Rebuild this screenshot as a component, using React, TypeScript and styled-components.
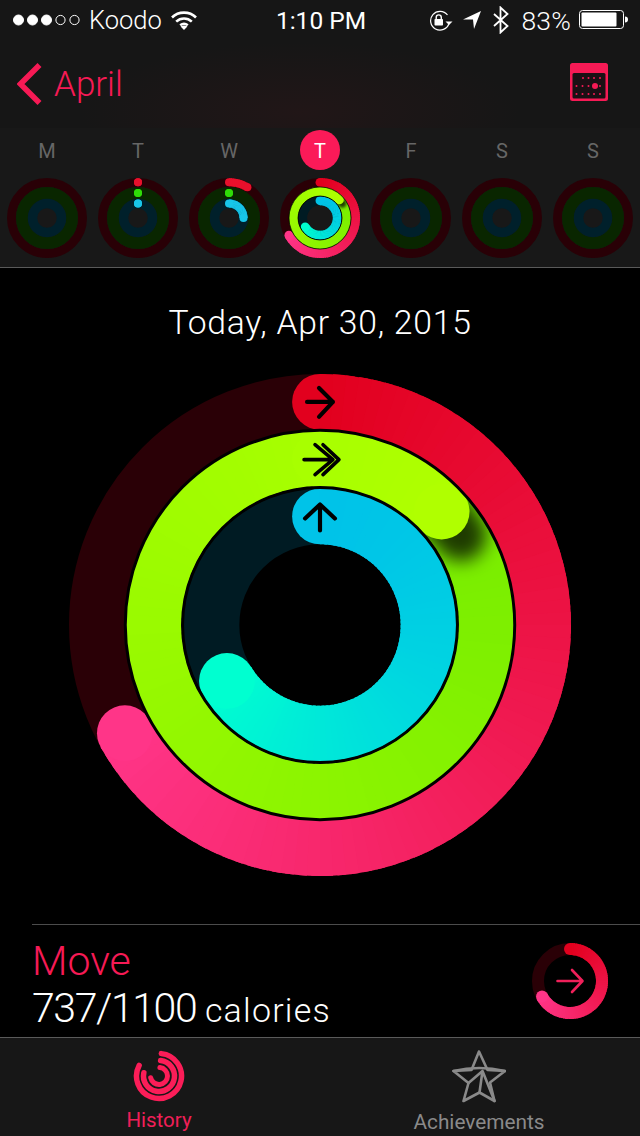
import React, { useId } from "react";
import styled, { createGlobalStyle } from "styled-components";

const PINK = "#f61a55";
const FONT = `Roboto, "Liberation Sans", sans-serif`;

const Global = createGlobalStyle`
  html, body { margin: 0; padding: 0; background: #000; }
  *, *::before, *::after { box-sizing: border-box; }
  #root { width: 640px; height: 1136px; overflow: hidden; }
`;

const Screen = styled.div`
  width: 640px; height: 1136px; display: flex; flex-direction: column;
  background: #000; color: #fff; font-family: ${FONT}; font-weight: 300;
`;
const Header = styled.header`
  background: radial-gradient(220px 70px at 300px 112px, #211617, #161616);
`;
const StatusBar = styled.div`
  height: 40px; display: grid; grid-template-columns: 1fr auto 1fr; align-items: center;
  padding: 0 11px 0 13px; font-size: 25.5px; color: #fff;
`;
const StatusLeft = styled.div`display: flex; align-items: center; gap: 9px;`;
const StatusRight = styled.div`
  display: flex; align-items: center; justify-content: flex-end; gap: 10px;
  svg:nth-child(2) { margin-right: 2px; }
`;
const Clock = styled.div`font-weight: 400; font-size: 24.5px;`;
const Percent = styled.span`font-size: 26.5px; letter-spacing: .2px; margin: 0 -2px 0 2px;`;
const NavBar = styled.nav`
  height: 88px; display: flex; align-items: center; justify-content: space-between;
  padding: 0 32px 4px 17px;
`;
const BackLink = styled.div`
  display: flex; align-items: center; gap: 12px; color: ${PINK};
  font-size: 35px; margin-top: 4px;
`;
const WeekStrip = styled.section`
  height: 140px; border-bottom: 1px solid #5a5a5a;
  background: #181818; display: grid; grid-template-columns: repeat(7, 91px);
  padding: 0 1.5px;
`;
const DayCell = styled.div`display: flex; flex-direction: column; align-items: center;`;
const DayLetter = styled.div<{ $active?: boolean }>`
  width: 40px; height: 40px; margin: 2px 0 8px; border-radius: 50%;
  display: flex; align-items: center; justify-content: center;
  font-size: 20px; font-weight: 400; padding-top: 1px;
  color: ${(p) => (p.$active ? "#fff" : "#666")};
  background: ${(p) => (p.$active ? "#fb1a58" : "transparent")};
`;
const Main = styled.main`flex: 1; display: flex; flex-direction: column; align-items: center; min-height: 0;`;
const DateTitle = styled.h1`
  margin: 35px 0 31px; height: 40px; line-height: 40px;
  font-size: 33.7px; font-weight: 300; letter-spacing: .75px;
`;
const Divider = styled.div`align-self: stretch; height: 1px; margin: 48px 0 0 32px; background: #4c4c4c;`;
const Summary = styled.section`
  align-self: stretch; display: flex; justify-content: space-between; align-items: center;
  padding: 0 30px 0 32px; flex: 1;
`;
const SummaryText = styled.div`display: flex; flex-direction: column; margin-top: 10px;`;
const MetricName = styled.div`color: ${PINK}; font-size: 41px; line-height: 46px;`;
const MetricValue = styled.div`font-size: 41px; line-height: 48px; letter-spacing: -1.4px;`;
const MetricUnit = styled.span`font-size: 34px; letter-spacing: 1.2px;`;
const TabBar = styled.footer`
  height: 99px; border-top: 1px solid #5a5a5a; background: #171717;
  display: grid; grid-template-columns: 318px 1fr;
`;
const Tab = styled.div<{ $active?: boolean }>`
  display: flex; flex-direction: column; align-items: center; padding-top: 12px;
  color: ${(p) => (p.$active ? "#f01f58" : "#8a8a8a")}; font-size: 20.5px; font-weight: 400;
`;
const TabLabel = styled.div<{ $wide?: boolean }>`
  margin-top: 6px; line-height: 24px; font-size: ${(p) => (p.$wide ? "20.8px" : "20.5px")};
`;

type Stop = [number, number, number];
const hex = (h: string): Stop => [parseInt(h.slice(1, 3), 16), parseInt(h.slice(3, 5), 16), parseInt(h.slice(5, 7), 16)];
const mix = (a: string, b: string, t: number) => {
  const x = hex(a), y = hex(b);
  return `rgb(${x.map((v, i) => Math.round(v + (y[i] - v) * t)).join(",")})`;
};
const polar = (c: number, r: number, deg: number) => {
  const a = ((deg - 90) * Math.PI) / 180;
  return [c + r * Math.cos(a), c + r * Math.sin(a)];
};
const arcPath = (c: number, r: number, a: number, b: number) => {
  const [x1, y1] = polar(c, r, a), [x2, y2] = polar(c, r, b);
  return `M${x1.toFixed(2)} ${y1.toFixed(2)}A${r} ${r} 0 ${b - a > 180 ? 1 : 0} 1 ${x2.toFixed(2)} ${y2.toFixed(2)}`;
};

function Sweep(p: { c: number; r: number; w: number; from: string; to: string; a: number; b: number; total: number; ease?: number; cap?: boolean; startCap?: boolean }) {
  const segs = [];
  const step = 3;
  const tone = (d: number) => mix(p.from, p.to, Math.pow(d / p.total, p.ease ?? 1));
  for (let d = p.a; d < p.b; d += step) {
    const e = Math.min(d + step + 2, p.b);
    segs.push(<path key={d} d={arcPath(p.c, p.r, d, e)} fill="none" stroke={tone(d)} strokeWidth={p.w} />);
  }
  const [sx, sy] = polar(p.c, p.r, p.a), [ex, ey] = polar(p.c, p.r, p.b);
  return (
    <g>
      {p.startCap && <circle cx={sx} cy={sy} r={p.w / 2} fill={tone(p.a)} />}
      {segs}
      {p.cap && <circle cx={ex} cy={ey} r={p.w / 2} fill={tone(p.b)} />}
    </g>
  );
}

function ActivityRings({ size, arrows }: { size: number; arrows?: boolean }) {
  const id = useId().replace(/[^a-z0-9]/gi, "");
  const c = 252;
  return (
    <svg width={size} height={size} viewBox="0 0 504 504" style={{ display: "block", flex: "none" }}>
      <defs>
        <filter id={`b${id}`} filterUnits="userSpaceOnUse" x="0" y="0" width="504" height="504"><feGaussianBlur stdDeviation="9" /></filter>
        <clipPath id={`c${id}`}>
          <path clipRule="evenodd" d="M252 57a195 195 0 1 1 0 390a195 195 0 1 1 0-390zM252 113a139 139 0 1 0 0 278a139 139 0 1 0 0-278z" />
        </clipPath>
      </defs>
      <circle cx={c} cy={c} r={224} fill="none" stroke="#2a0006" strokeWidth={56} />
      <circle cx={c} cy={c} r={109} fill="none" stroke="#001b23" strokeWidth={56} />
      <Sweep c={c} r={224} w={56} from="#e2001e" to="#ff3588" a={0} b={241} total={241} cap startCap />
      <Sweep c={c} r={167} w={56} from="#70ea00" to="#a8ff00" a={0} b={360} total={360} />
      <g clipPath={`url(#c${id})`}>
        <path d={arcPath(c, 167, 40, 54)} fill="none" stroke="#000" strokeOpacity=".75" strokeWidth={52} strokeLinecap="round" filter={`url(#b${id})`} transform="translate(6 8)" />
      </g>
      <Sweep c={c} r={167} w={56} from="#a8ff00" to="#b0ff00" a={0} b={47} total={47} cap startCap />
      <Sweep c={c} r={109} w={56} from="#00c3e8" to="#00ffd0" a={0} b={239} total={239} ease={1.6} cap startCap />
      <circle cx={c} cy={c} r={195.5} fill="none" stroke="#000" strokeWidth={arrows ? 3 : 5} />
      <circle cx={c} cy={c} r={138} fill="none" stroke="#000" strokeWidth={arrows ? 3 : 6} />
      {arrows && (
        <g fill="none" stroke="#000" strokeWidth={4.2} strokeLinecap="round" strokeLinejoin="round">
          <path d="M239 28H265M251 14L265 28L251 43" />
          <path d="M236 86H264M247 71L265 86L247 101M255 71L271 86L255 101" strokeWidth={3.6} />
          <path d="M252 157V131M237 145L252 131L267 145" />
        </g>
      )}
    </svg>
  );
}

type DayRing = { red?: number; green?: number; blue?: number };
function MiniRings({ red, green, blue }: DayRing) {
  const c = 40;
  return (
    <svg width={80} height={80} viewBox="0 0 80 80" style={{ display: "block" }}>
      <circle cx={c} cy={c} r={35.5} fill="none" stroke="#290006" strokeWidth={9} />
      <circle cx={c} cy={c} r={25} fill="none" stroke="#092600" strokeWidth={12} />
      <circle cx={c} cy={c} r={14.5} fill="none" stroke="#00202b" strokeWidth={9.500} />
      {red !== undefined && <Sweep c={c} r={35.8} w={8} from="#e9102c" to="#e9102c" a={0} b={red} total={1} cap startCap />}
      {green !== undefined && <Sweep c={c} r={25} w={8} from="#2fdc08" to="#2fdc08" a={0} b={green} total={1} cap startCap />}
      {blue !== undefined && <Sweep c={c} r={14.5} w={8} from="#18c6ea" to="#18c6ea" a={0} b={blue} total={1} cap startCap />}
    </svg>
  );
}

const Signal = () => (
  <svg width="67" height="14" viewBox="0 0 67 14" fill="#fff" stroke="#fff">
    <circle cx="5.5" cy="7" r="5" /><circle cx="19.5" cy="7" r="5" /><circle cx="33.5" cy="7" r="5" />
    <circle cx="47.5" cy="7" r="4.6" fill="none" strokeWidth="1" /><circle cx="61.5" cy="7" r="4.6" fill="none" strokeWidth="1" />
  </svg>
);
const Wifi = () => (
  <svg width="26" height="20" viewBox="0 0 26 20" fill="none" stroke="#fff" strokeWidth="2.6">
    <path d="M1 7.5C7.5 1 18.5 1 25 7.5" /><path d="M5.2 11.6C9.8 7.4 16.2 7.4 20.8 11.6" />
    <path d="M9.2 15.2C11.5 13.4 14.5 13.4 16.8 15.2" /><path d="M13 20L9.6 16.6C11.5 15 14.5 15 16.4 16.6Z" fill="#fff" stroke="none" />
  </svg>
);
const RotationLock = () => (
  <svg width="25" height="21" viewBox="0 0 25 21">
    <path d="M21 13.5A9.4 9.4 0 1 1 19.5 5" fill="none" stroke="#fff" strokeWidth="1.2" />
    <path d="M17.5 11.5H24.5L21 15Z" fill="#fff" />
    <rect x="6.5" y="9" width="8.5" height="6.5" rx=".8" fill="#fff" />
    <path d="M8.2 9V7.4a2.55 2.55 0 0 1 5.1 0V9" fill="none" stroke="#fff" strokeWidth="1.4" />
  </svg>
);
const Location = () => (
  <svg width="18" height="18" viewBox="0 0 18 18"><path d="M0 8.5L18 0L11 18L10 8.5Z" fill="#fff" /></svg>
);
const Bluetooth = () => (
  <svg width="16" height="28" viewBox="0 0 16 28" fill="none" stroke="#fff" strokeWidth="1.8">
    <path d="M1 8L14.5 20L7.5 26.5V1.5L14.5 8L1 20" />
  </svg>
);
const Battery = () => (
  <svg width="50" height="20" viewBox="0 0 50 20">
    <rect x=".5" y=".5" width="44" height="18" rx="3" fill="none" stroke="#fff" />
    <rect x="2.5" y="2.5" width="35" height="14" rx="1" fill="#fff" />
    <path d="M46 6.5C48 6.5 49 7.5 49 9.5S48 12.5 46 12.5Z" fill="#fff" />
  </svg>
);
const Chevron = () => (
  <svg width="25" height="42" viewBox="0 0 25 42" fill="none" stroke={PINK} strokeWidth="5.6" strokeLinejoin="miter">
    <path d="M22.5 2L3.5 21L22.5 40" />
  </svg>
);
const CalendarIcon = () => {
  const dots = [];
  for (const [y, xs] of [[15, [13, 18.5, 24, 30]], [23, [6.5, 12.5, 18.5, 30]], [31, [6.5, 12.5, 18.5, 24, 30]]] as [number, number[]][]) {
    for (const x of xs) dots.push(<circle key={`${x}-${y}`} cx={x} cy={y} r="1" fill={PINK} />);
  }
  return (
    <svg width="38" height="38" viewBox="0 0 38 38">
      <rect width="38" height="38" rx="2.5" fill={PINK} />
      <rect x="2.5" y="10" width="33" height="25.5" rx="1.5" fill="#1a1014" />
      {dots}
      <circle cx="25" cy="23" r="3" fill={PINK} />
    </svg>
  );
};
const HistoryIcon = () => (
  <svg width="52" height="52" viewBox="0 0 52 52" fill="none" stroke="#fb1d58" strokeLinecap="round">
    <path d={arcPath(26, 22.5, 6, 298)} strokeWidth="5.5" />
    <path d={arcPath(26, 15.5, 6, 282)} strokeWidth="5.5" />
    <path d={arcPath(26, 8.5, 6, 258)} strokeWidth="5" />
  </svg>
);
const StarIcon = () => (
  <svg width="54" height="54" viewBox="0 0 54 54" fill="none" stroke="#8a8a8a" strokeWidth="2.6" strokeLinejoin="round" strokeLinecap="round">
    <path d="M27 1.5L19.500 20L1.500 21L16.500 33L11.500 51L27.500 42.500L42.500 51L38 32.500L53 21L35.500 20Z" />
    <path d="M1.500 21C18.500 17 36 17 53 21" />
    <path d="M30.500 21L16.500 33M30.500 21L27.500 42.500M30.500 21L42.500 51" />
  </svg>
);
const MoveRing = () => {
  const c = 40;
  return (
    <svg width="80" height="80" viewBox="0 0 80 80">
      <circle cx={c} cy={c} r={32} fill="none" stroke="#2a0006" strokeWidth={12} />
      <Sweep c={c} r={32} w={12} from="#e2001e" to="#ff3588" a={0} b={241} total={241} cap startCap />
      <path d="M27.500 40H52M42 29L52.500 40L42 51" fill="none" stroke="#f0205a" strokeWidth="2.6" strokeLinecap="round" strokeLinejoin="round" />
    </svg>
  );
};

const days: { l: string; active?: boolean; ring?: DayRing }[] = [
  { l: "M" },
  { l: "T", ring: { red: 0, green: 0, blue: 0 } },
  { l: "W", ring: { red: 31, green: 0, blue: 90 } },
  { l: "T", active: true },
  { l: "F" },
  { l: "S" },
  { l: "S" },
];

export default function App() {
  return (
    <Screen>
      <Global />
      <Header>
        <StatusBar>
          <StatusLeft><Signal /><span>Koodo</span><Wifi /></StatusLeft>
          <Clock>1:10 PM</Clock>
          <StatusRight><RotationLock /><Location /><Bluetooth /><Percent>83%</Percent><Battery /></StatusRight>
        </StatusBar>
        <NavBar>
          <BackLink><Chevron /><span>April</span></BackLink>
          <CalendarIcon />
        </NavBar>
      </Header>
      <WeekStrip>
        {days.map((d, i) => (
          <DayCell key={i}>
            <DayLetter $active={d.active}>{d.l}</DayLetter>
            {d.active ? <ActivityRings size={80} /> : <MiniRings {...d.ring} />}
          </DayCell>
        ))}
      </WeekStrip>
      <Main>
        <DateTitle>Today, Apr 30, 2015</DateTitle>
        <ActivityRings size={502} arrows />
        <Divider />
        <Summary>
          <SummaryText>
            <MetricName>Move</MetricName>
            <MetricValue>737/1100 <MetricUnit>calories</MetricUnit></MetricValue>
          </SummaryText>
          <MoveRing />
        </Summary>
      </Main>
      <TabBar>
        <Tab $active><HistoryIcon /><TabLabel>History</TabLabel></Tab>
        <Tab><StarIcon /><TabLabel $wide>Achievements</TabLabel></Tab>
      </TabBar>
    </Screen>
  );
}
